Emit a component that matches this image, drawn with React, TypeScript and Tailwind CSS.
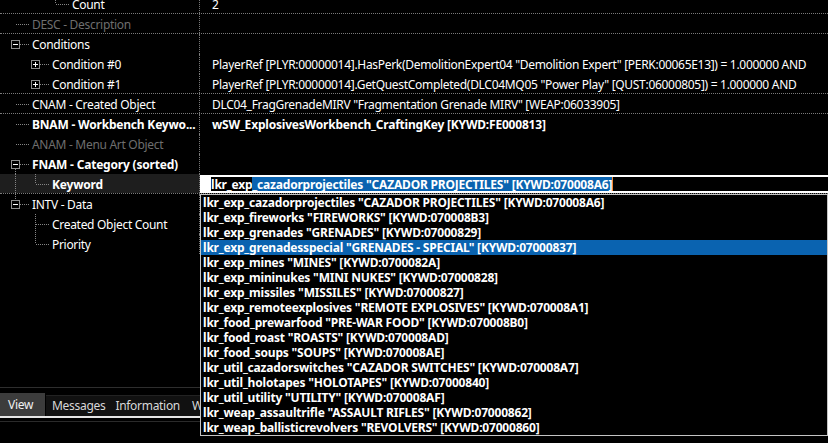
import React from 'react';

type Seg = [number, number, number];

type Row = {
  label: string;
  level: number;
  box?: 'minus' | 'plus';
  value?: string;
  grey?: boolean;
  bold?: boolean;
  boldValue?: boolean;
  line?: boolean;
  selected?: boolean;
  v: Seg[];
};

const DOT = '#858585';

const rows: Row[] = [
  { label: 'Count', level: 3, value: '2', line: true, v: [[55, 0, 10]] },
  { label: 'DESC - Description', level: 1, grey: true, line: true, v: [] },
  { label: 'Conditions', level: 1, box: 'minus', v: [] },
  {
    label: 'Condition #0',
    level: 2,
    box: 'plus',
    value:
      'PlayerRef [PLYR:00000014].HasPerk(DemolitionExpert04 "Demolition Expert" [PERK:00065E13]) = 1.000000 AND',
    v: [],
  },
  {
    label: 'Condition #1',
    level: 2,
    box: 'plus',
    value:
      'PlayerRef [PLYR:00000014].GetQuestCompleted(DLC04MQ05 "Power Play" [QUST:06000805]) = 1.000000 AND',
    line: true,
    v: [],
  },
  {
    label: 'CNAM - Created Object',
    level: 1,
    value: 'DLC04_FragGrenadeMIRV "Fragmentation Grenade MIRV" [WEAP:06033905]',
    line: true,
    v: [],
  },
  {
    label: 'BNAM - Workbench Keywo...',
    level: 1,
    bold: true,
    boldValue: true,
    value: 'wSW_ExplosivesWorkbench_CraftingKey [KYWD:FE000813]',
    v: [],
  },
  { label: 'ANAM - Menu Art Object', level: 1, grey: true, v: [] },
  { label: 'FNAM - Category (sorted)', level: 1, bold: true, box: 'minus', v: [[15, 15, 20], [35, 15, 20]] },
  { label: 'Keyword', level: 2, bold: true, selected: true, line: true, v: [[15, 0, 20], [35, 0, 10]] },
  { label: 'INTV - Data', level: 1, box: 'minus', v: [[15, 0, 6], [35, 15, 20]] },
  { label: 'Created Object Count', level: 2, v: [[35, 0, 20]] },
  { label: 'Priority', level: 2, v: [[35, 0, 10]] },
];

const items = [
  'lkr_exp_cazadorprojectiles "CAZADOR PROJECTILES" [KYWD:070008A6]',
  'lkr_exp_fireworks "FIREWORKS" [KYWD:070008B3]',
  'lkr_exp_grenades "GRENADES" [KYWD:07000829]',
  'lkr_exp_grenadesspecial "GRENADES - SPECIAL" [KYWD:07000837]',
  'lkr_exp_mines "MINES" [KYWD:0700082A]',
  'lkr_exp_mininukes "MINI NUKES" [KYWD:07000828]',
  'lkr_exp_missiles "MISSILES" [KYWD:07000827]',
  'lkr_exp_remoteexplosives "REMOTE EXPLOSIVES" [KYWD:070008A1]',
  'lkr_food_prewarfood "PRE-WAR FOOD" [KYWD:070008B0]',
  'lkr_food_roast "ROASTS" [KYWD:070008AD]',
  'lkr_food_soups "SOUPS" [KYWD:070008AE]',
  'lkr_util_cazadorswitches "CAZADOR SWITCHES" [KYWD:070008A7]',
  'lkr_util_holotapes "HOLOTAPES" [KYWD:07000840]',
  'lkr_util_utility "UTILITY" [KYWD:070008AF]',
  'lkr_weap_assaultrifle "ASSAULT RIFLES" [KYWD:07000862]',
  'lkr_weap_ballisticrevolvers "REVOLVERS" [KYWD:07000860]',
];

function Indent({ row }: { row: Row }) {
  const w = row.level * 20 + 12;
  const cx = (row.level - 1) * 20 + 15;
  return (
    <svg width={w} height={20} className="shrink-0 block self-start">
      {row.v.map(([x, y1, y2], i) => (
        <line key={i} x1={x + 0.5} y1={y1} x2={x + 0.5} y2={y2} stroke={DOT} strokeDasharray="1 1" />
      ))}
      <line
        x1={row.box ? cx + 5 : cx + 1}
        y1={10.5}
        x2={cx + 15}
        y2={10.5}
        stroke={DOT}
        strokeDasharray="1 1"
      />
      {row.box && (
        <g>
          <rect x={cx - 3.5} y={6.5} width={8} height={8} fill="#000" stroke="#8c8c8c" />
          <line x1={cx - 2} y1={10.5} x2={cx + 3} y2={10.5} stroke="#ffffff" />
          {row.box === 'plus' && <line x1={cx + 0.5} y1={8} x2={cx + 0.5} y2={13} stroke="#ffffff" />}
        </g>
      )}
    </svg>
  );
}

function TreeRow({ row }: { row: Row }) {
  return (
    <div className={`flex h-[20px] ${row.line ? 'border-b border-dotted border-[#7a7a7a]' : ''}`}>
      <div
        className={`w-[200px] shrink-0 flex items-center overflow-hidden whitespace-nowrap border-r border-dotted border-[#7a7a7a] ${
          row.selected ? 'bg-[#1e1e1e]' : ''
        }`}
      >
        <Indent row={row} />
        <span
          className={`${row.grey ? 'text-[#6e6e6e]' : 'text-white'} ${
            row.bold ? 'font-bold tracking-[-0.2px]' : ''
          } pt-[2px] leading-[18px]`}
        >
          {row.label}
        </span>
      </div>
      {row.selected ? (
        <div className="flex-1 flex flex-col">
          <div className="mt-[1px] h-[18px] bg-white pl-[11px] py-[2px]">
            <div className="h-full bg-black flex items-center font-bold tracking-[-0.2px] whitespace-nowrap leading-[14px]">
              <span className="pt-[1px]">lkr_exp</span>
              <span className="bg-[#0a63b0] h-full flex items-center pt-[1px]">
                _cazadorprojectiles "CAZADOR PROJECTILES" [KYWD:070008A6]
              </span>
              <span className="w-px h-full bg-[#f08a30]" />
            </div>
          </div>
        </div>
      ) : (
        <div
          className={`flex-1 pl-[12px] pt-[2px] flex items-center whitespace-nowrap overflow-hidden ${
            row.boldValue ? 'font-bold tracking-[-0.2px]' : ''
          }`}
        >
          {row.value ?? ''}
        </div>
      )}
    </div>
  );
}

export default function App() {
  return (
    <div className="w-[828px] h-[443px] bg-black relative overflow-hidden font-['Noto_Sans',sans-serif] text-[12px] tracking-[-0.3px] text-white">
      <div className="h-[387px] overflow-hidden">
        <div className="-mt-[6px]">
          {rows.map((r, i) => (
            <TreeRow key={i} row={r} />
          ))}
        </div>
      </div>
      <div className="h-px bg-[#2e2e2e]" />
      <div className="h-[28px] flex items-end text-[#d8d8d8]">
        <div className="h-[23px] w-[45px] bg-[#3c3c3c] flex items-center pl-[8px] pt-[1px] text-[#f0f0f0]">View</div>
        <div className="h-[21px] ml-[1px] bg-[#111111] border-t border-[#222] flex items-center pl-[6px] pr-[5px]">
          Messages
        </div>
        <div className="h-[21px] bg-[#111111] border-t border-[#222] flex items-center px-[5px]">Information</div>
        <div className="h-[21px] bg-[#111111] border-t border-[#222] flex items-center px-[7px]">Workspace</div>
      </div>
      <div className="h-[2px] bg-[#e4e4e4]" />
      <div className="h-[3px]" />
      <div className="h-px bg-[#2a2a2a]" />

      <div className="absolute left-[200px] top-[194px] w-[628px] border border-[#c4c4c4] bg-black">
        {items.map((t, i) => (
          <div
            key={i}
            className={`h-[15px] leading-[15px] px-[2px] font-bold tracking-[-0.2px] whitespace-nowrap ${
              i === 3 ? 'bg-[#0a63b0]' : ''
            }`}
          >
            {t}
          </div>
        ))}
      </div>
    </div>
  );
}
